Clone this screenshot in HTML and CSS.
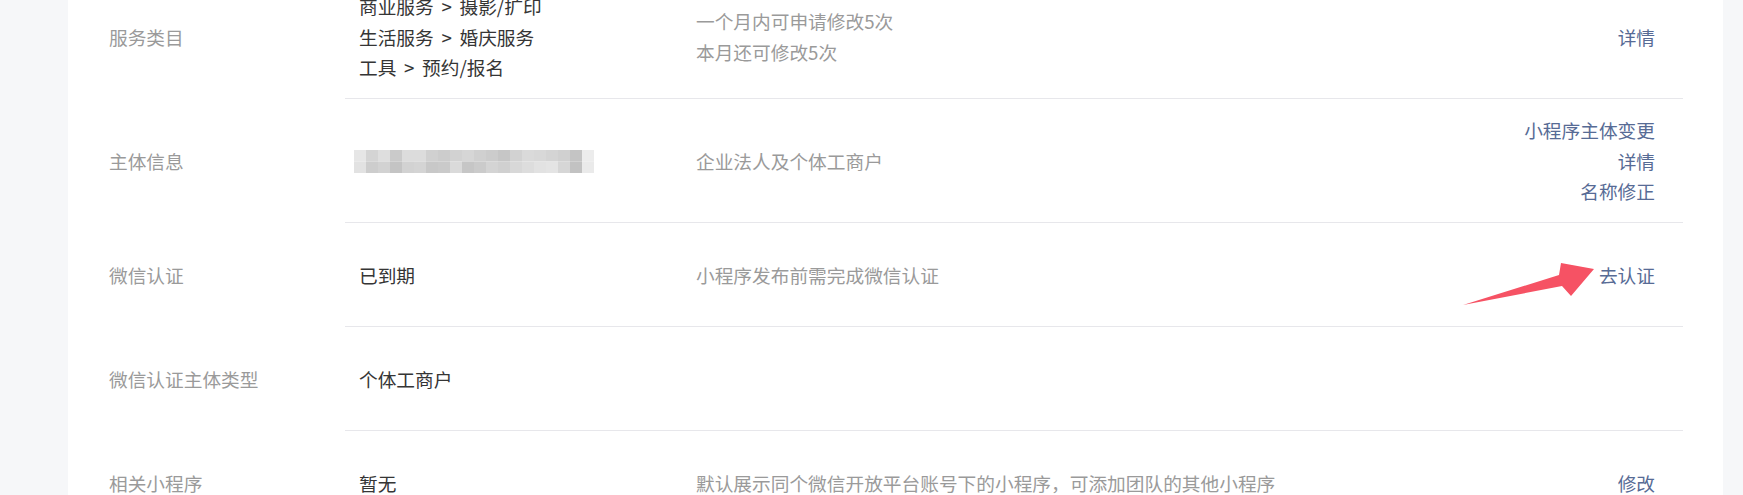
FILE: index.html
```html
<!DOCTYPE html>
<html lang="zh-CN">
<head>
<meta charset="utf-8">
<title>设置</title>
<link rel="stylesheet" href="styles.css">
</head>
<body>
<div class="page">
  <div class="card">
    <div class="row">
      <div class="label">服务类目</div>
      <div class="cells">
        <div class="value cats">商业服务 &gt; 摄影/扩印<br>生活服务 &gt; 婚庆服务<br>工具 &gt; 预约/报名</div>
        <div class="desc">一个月内可申请修改5次<br>本月还可修改5次</div>
        <div class="action"><a>详情</a></div>
      </div>
    </div>
    <div class="row">
      <div class="label">主体信息</div>
      <div class="cells">
        <div class="value">
          <svg class="mosaic" width="240" height="23" viewBox="0 0 240 23">
            <rect x="0" y="0" width="12" height="11.5" fill="#e6e6e6"/>
            <rect x="12" y="0" width="12" height="11.5" fill="#d4d4d4"/>
            <rect x="24" y="0" width="12" height="11.5" fill="#dedede"/>
            <rect x="36" y="0" width="12" height="11.5" fill="#cacaca"/>
            <rect x="48" y="0" width="12" height="11.5" fill="#dcdcdc"/>
            <rect x="60" y="0" width="12" height="11.5" fill="#dcdcdc"/>
            <rect x="72" y="0" width="12" height="11.5" fill="#d0d0d0"/>
            <rect x="84" y="0" width="12" height="11.5" fill="#cccccc"/>
            <rect x="96" y="0" width="12" height="11.5" fill="#d2d2d2"/>
            <rect x="108" y="0" width="12" height="11.5" fill="#d6d6d6"/>
            <rect x="120" y="0" width="12" height="11.5" fill="#d0d0d0"/>
            <rect x="132" y="0" width="12" height="11.5" fill="#cccccc"/>
            <rect x="144" y="0" width="12" height="11.5" fill="#c6c6c6"/>
            <rect x="156" y="0" width="12" height="11.5" fill="#d2d2d2"/>
            <rect x="168" y="0" width="12" height="11.5" fill="#dadada"/>
            <rect x="180" y="0" width="12" height="11.5" fill="#d8d8d8"/>
            <rect x="192" y="0" width="12" height="11.5" fill="#d4d4d4"/>
            <rect x="204" y="0" width="12" height="11.5" fill="#d0d0d0"/>
            <rect x="216" y="0" width="12" height="11.5" fill="#c4c4c4"/>
            <rect x="228" y="0" width="12" height="11.5" fill="#ececec"/>
            <rect x="0" y="11.5" width="12" height="11.5" fill="#e2e2e2"/>
            <rect x="12" y="11.5" width="12" height="11.5" fill="#cdcdcd"/>
            <rect x="24" y="11.5" width="12" height="11.5" fill="#d2d2d2"/>
            <rect x="36" y="11.5" width="12" height="11.5" fill="#c4c4c4"/>
            <rect x="48" y="11.5" width="12" height="11.5" fill="#d2d2d2"/>
            <rect x="60" y="11.5" width="12" height="11.5" fill="#d4d4d4"/>
            <rect x="72" y="11.5" width="12" height="11.5" fill="#c8c8c8"/>
            <rect x="84" y="11.5" width="12" height="11.5" fill="#cacaca"/>
            <rect x="96" y="11.5" width="12" height="11.5" fill="#dadada"/>
            <rect x="108" y="11.5" width="12" height="11.5" fill="#c6c6c6"/>
            <rect x="120" y="11.5" width="12" height="11.5" fill="#cbcbcb"/>
            <rect x="132" y="11.5" width="12" height="11.5" fill="#d4d4d4"/>
            <rect x="144" y="11.5" width="12" height="11.5" fill="#d0d0d0"/>
            <rect x="156" y="11.5" width="12" height="11.5" fill="#d8d8d8"/>
            <rect x="168" y="11.5" width="12" height="11.5" fill="#dddddd"/>
            <rect x="180" y="11.5" width="12" height="11.5" fill="#e2e2e2"/>
            <rect x="192" y="11.5" width="12" height="11.5" fill="#e4e4e4"/>
            <rect x="204" y="11.5" width="12" height="11.5" fill="#d6d6d6"/>
            <rect x="216" y="11.5" width="12" height="11.5" fill="#c2c2c2"/>
            <rect x="228" y="11.5" width="12" height="11.5" fill="#eaeaea"/>
          </svg>
        </div>
        <div class="desc">企业法人及个体工商户</div>
        <div class="action"><a>小程序主体变更</a><a>详情</a><a>名称修正</a></div>
      </div>
    </div>
    <div class="row">
      <div class="label">微信认证</div>
      <div class="cells">
        <div class="value">已到期</div>
        <div class="desc">小程序发布前需完成微信认证</div>
        <div class="action"><a>去认证</a></div>
      </div>
    </div>
    <div class="row">
      <div class="label">微信认证主体类型</div>
      <div class="cells">
        <div class="value">个体工商户</div>
        <div class="desc"></div>
        <div class="action"></div>
      </div>
    </div>
    <div class="row">
      <div class="label">相关小程序</div>
      <div class="cells">
        <div class="value">暂无</div>
        <div class="desc">默认展示同个微信开放平台账号下的小程序，可添加团队的其他小程序</div>
        <div class="action"><a>修改</a></div>
      </div>
    </div>
  </div>
  <svg class="arrow" width="145" height="55" viewBox="0 0 145 55">
    <polygon points="8,49 104,19 106,7 139,13 116,40 107,30" fill="#f65264"/>
  </svg>
</div>
</body>
</html>
```

FILE: styles.css
```css
html, body {
  margin: 0;
  height: 495px;
  overflow: hidden;
}

body {
  background: #f6f7f9;
  font-family: "Noto Sans CJK SC", "Noto Sans", sans-serif;
  font-size: 18.7px;
  line-height: 30.67px;
}

.page {
  position: relative;
  display: flow-root;
  padding: 0 20px 0 68px;
}

.card {
  background: #ffffff;
  margin-top: -25px;
}

.row {
  display: grid;
  grid-template-columns: 277px 1fr;
  margin-right: 40px;
}

.label {
  align-self: center;
  padding-left: 41px;
  color: #9a9a9a;
}

.cells {
  display: flex;
  align-items: center;
  box-sizing: border-box;
  min-height: 104px;
  padding: 16px 28px 15px 14px;
  border-bottom: 1px solid #e7e7eb;
}

.value {
  width: 337px;
  flex: none;
  color: #353535;
}

.cats {
  word-spacing: 3.5px;
}

.mosaic {
  display: block;
  margin-left: -5px;
}

.desc {
  flex: 1;
  color: #9a9a9a;
}

.action {
  display: flex;
  flex-direction: column;
  align-items: flex-end;
  color: #576b95;
}

.arrow {
  position: absolute;
  left: 1455px;
  top: 256px;
}
```
